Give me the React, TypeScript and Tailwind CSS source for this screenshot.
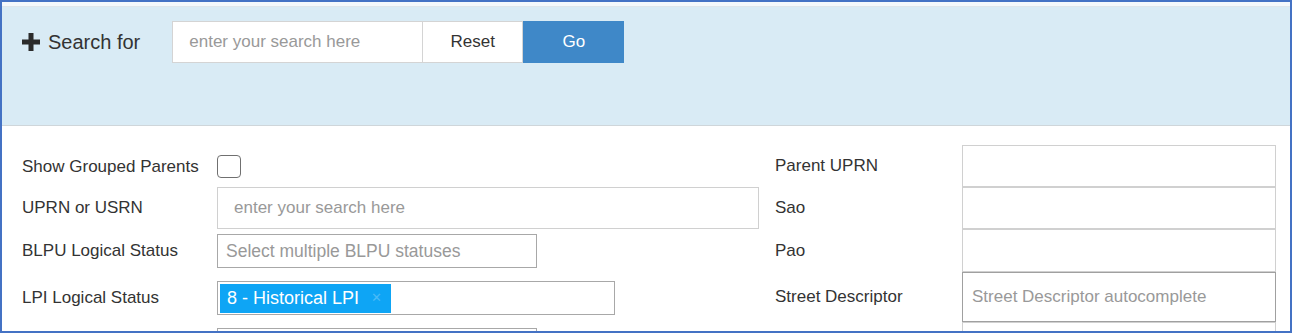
import React from "react";

const font = { fontFamily: '"Liberation Sans", Arial, sans-serif' };

function PlusIcon() {
  return (
    <svg width="18" height="18" viewBox="0 0 18 18" className="shrink-0">
      <path d="M6.5 0h5v6.5H18v5h-6.5V18h-5v-6.5H0v-5h6.5z" fill="#2b2b2b" />
    </svg>
  );
}

function Row({
  label,
  children,
  className = "",
  labelWidth = "w-[195px]",
}: {
  label: string;
  children: React.ReactNode;
  className?: string;
  labelWidth?: string;
}) {
  return (
    <div className={`flex items-center ${className}`}>
      <div className={`${labelWidth} shrink-0 text-[17px] text-[#333]`}>{label}</div>
      {children}
    </div>
  );
}

export default function App() {
  return (
    <div
      style={font}
      className="w-[1292px] h-[333px] border-2 border-[#4472c4] bg-white overflow-hidden box-border"
    >
      <div className="pt-[4px] bg-[#f4f8fb]">
        {/* search header */}
        <div className="h-[120px] border-t border-[#dfe6ea] border-b border-b-[#cfd6da] bg-[#d9ebf5] pl-[20px] pt-[14px]">
          <div className="flex items-center h-[42px]">
            <PlusIcon />
            <span className="ml-[8px] text-[20px] text-[#333]">Search for</span>
            <div className="ml-[32px] w-[251px] h-[42px] bg-white border border-[#d4d4d4] flex items-center pl-[16px] text-[17px] text-[#999]">
              enter your search here
            </div>
            <button className="w-[100px] h-[42px] bg-white border border-l-0 border-[#d4d4d4] text-[17px] text-[#333]">
              Reset
            </button>
            <button className="w-[101px] h-[42px] bg-[#3f88c8] text-[17px] text-white">
              Go
            </button>
          </div>
        </div>
      </div>

      {/* filters */}
      <div className="flex pl-[20px] pt-[20px]">
        <div className="w-[753px] shrink-0">
          <Row label="Show Grouped Parents" className="h-[41px]">
            <div className="w-[24px] h-[23px] border border-[#707070] rounded-[4px] bg-white" />
          </Row>
          <Row label="UPRN or USRN" className="h-[42px]">
            <div className="w-[542px] h-[42px] border border-[#d0d0d0] flex items-center pl-[16px] text-[17px] text-[#999]">
              enter your search here
            </div>
          </Row>
          <Row label="BLPU Logical Status" className="mt-[5px] h-[34px]">
            <div className="w-[320px] h-[34px] border border-[#a8a8a8] flex items-center pl-[8px] text-[17.5px] text-[#999]">
              Select multiple BLPU statuses
            </div>
          </Row>
          <Row label="LPI Logical Status" className="mt-[13px] h-[34px]">
            <div className="w-[398px] h-[34px] border border-[#a8a8a8] flex items-center pl-[2px]">
              <div className="h-[29px] w-[171px] bg-[#0ea5f5] flex items-center pl-[7px] text-[18px] text-white">
                8 - Historical LPI
                <span className="ml-[12px] text-[13px] text-white/25">✕</span>
              </div>
            </div>
          </Row>
          <Row label="" className="mt-[13px] h-[34px]">
            <div className="w-[320px] h-[34px] border border-[#a8a8a8]" />
          </Row>
        </div>

        <div className="flex-1 -mt-[1px]">
          <Row label="Parent UPRN" labelWidth="w-[187px]" className="h-[42px]">
            <div className="w-[314px] h-[42px] border border-[#d0d0d0]" />
          </Row>
          <Row label="Sao" labelWidth="w-[187px]" className="h-[42px]">
            <div className="w-[314px] h-[42px] border border-[#d0d0d0]" />
          </Row>
          <Row label="Pao" labelWidth="w-[187px]" className="h-[43px]">
            <div className="w-[314px] h-[43px] border border-[#d0d0d0]" />
          </Row>
          <Row label="Street Descriptor" labelWidth="w-[187px]" className="h-[50px]">
            <div className="w-[314px] h-[50px] border border-[#a0a0a0] flex items-center pl-[9px] text-[17px] text-[#999]">
              Street Descriptor autocomplete
            </div>
          </Row>
          <Row label="" labelWidth="w-[187px]" className="h-[42px]">
            <div className="w-[314px] h-[42px] border border-[#d0d0d0]" />
          </Row>
        </div>
      </div>
    </div>
  );
}
